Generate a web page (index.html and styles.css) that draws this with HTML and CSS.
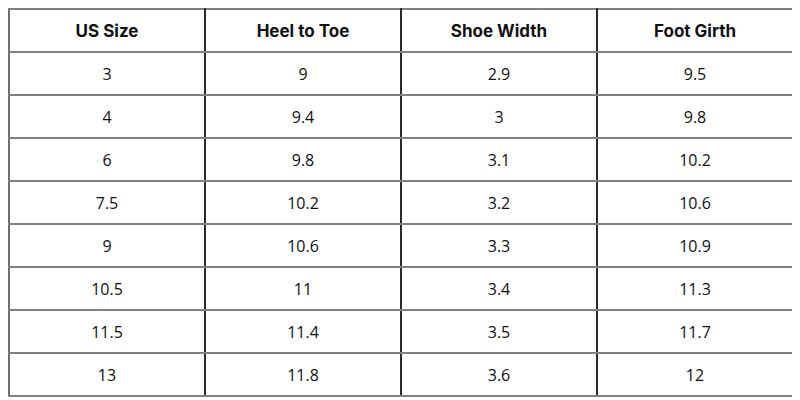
FILE: index.html
```html
<!DOCTYPE html>
<html>
<head>
<meta charset="utf-8">
<link rel="stylesheet" href="styles.css">
</head>
<body>
<table class="size-table">
  <thead>
    <tr><th>US Size</th><th>Heel to Toe</th><th>Shoe Width</th><th>Foot Girth</th></tr>
  </thead>
  <tbody>
    <tr><td>3</td><td>9</td><td>2.9</td><td>9.5</td></tr>
    <tr><td>4</td><td>9.4</td><td>3</td><td>9.8</td></tr>
    <tr><td>6</td><td>9.8</td><td>3.1</td><td>10.2</td></tr>
    <tr><td>7.5</td><td>10.2</td><td>3.2</td><td>10.6</td></tr>
    <tr><td>9</td><td>10.6</td><td>3.3</td><td>10.9</td></tr>
    <tr><td>10.5</td><td>11</td><td>3.4</td><td>11.3</td></tr>
    <tr><td>11.5</td><td>11.4</td><td>3.5</td><td>11.7</td></tr>
    <tr><td>13</td><td>11.8</td><td>3.6</td><td>12</td></tr>
  </tbody>
</table>
</body>
</html>
```

FILE: styles.css
```css
html, body {
  background: #ffffff;
}
body {
  margin: 8px;
  font-family: "Open Sans", "Liberation Sans", sans-serif;
  color: #111;
}
.size-table {
  width: 786px;
  table-layout: fixed;
  border-collapse: collapse;
  border: 2px solid #6e6e6e;
}
.size-table th,
.size-table td {
  height: 41px;
  padding: 0;
  text-align: center;
  vertical-align: middle;
  border-top: 2px solid #808080;
  border-bottom: 2px solid #808080;
  border-left: 2px solid #2a2a2a;
  border-right: 2px solid #2a2a2a;
}
.size-table th {
  font-family: "Inter", "Liberation Sans", sans-serif;
  font-weight: 700;
  font-size: 17px;
  color: #111;
}
.size-table td {
  font-size: 16px;
  font-weight: 400;
}
.size-table tr > :first-child { border-left-color: #6e6e6e; }
.size-table tr > :last-child { border-right-color: #6e6e6e; }
```
